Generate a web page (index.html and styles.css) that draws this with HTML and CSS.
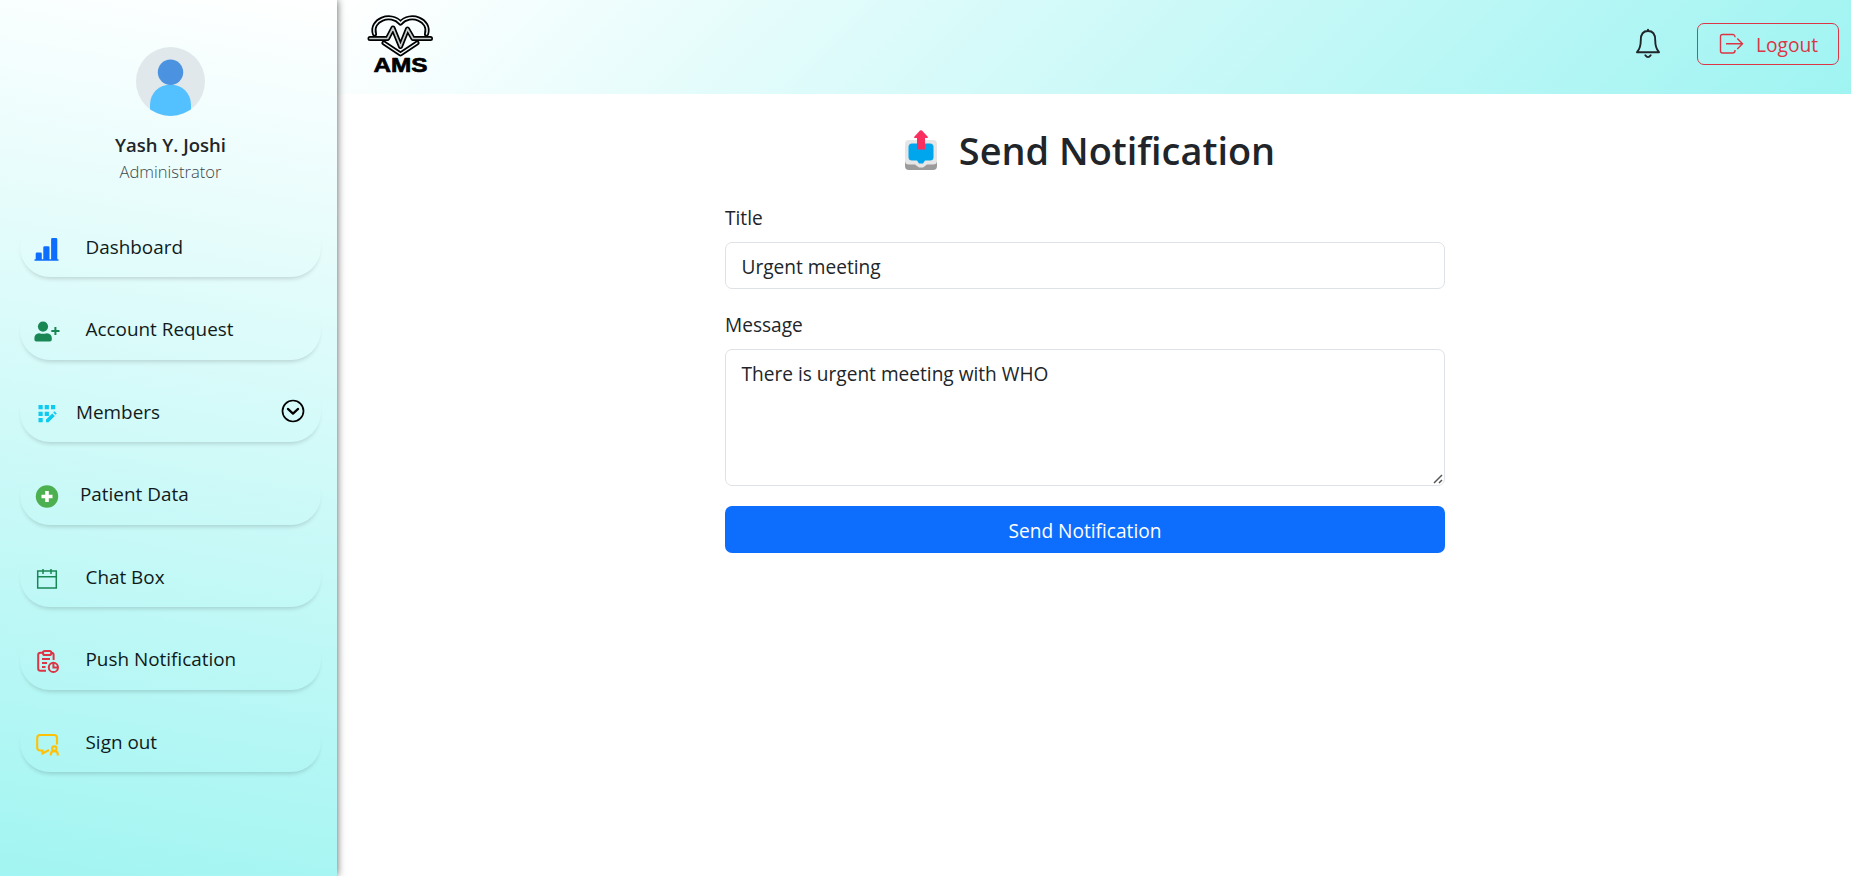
FILE: index.html
```html
<!DOCTYPE html>
<html lang="en">
<head>
<meta charset="utf-8">
<title>AMS - Send Notification</title>
<link rel="stylesheet" href="styles.css">
</head>
<body>
<div class="app">
  <aside class="sidebar">
    <div class="profile">
      <svg class="avatar" viewBox="0 0 69 69">
        <defs><clipPath id="face"><circle cx="34.5" cy="34.5" r="34.5"/></clipPath></defs>
        <g clip-path="url(#face)">
          <rect width="69" height="69" fill="#e1e8eb"/>
          <path d="M14 69V57.5a20.5 20 0 0 1 41 0V69z" fill="#53c0ff"/>
          <circle cx="34.5" cy="25.2" r="12.7" fill="#4b93e0"/>
        </g>
      </svg>
      <div class="name">Yash Y. Joshi</div>
      <div class="role">Administrator</div>
    </div>
    <nav class="menu">
      <a class="item">
        <svg class="icon" viewBox="0 0 26 26"><path fill="#0d6efd" d="M.5 23.2h1.2v-5.4q0-1.3 1.3-1.3h3.5q1.3 0 1.3 1.3v5.4h1.500V11.5q0-1.3 1.3-1.3h3.6q1.3 0 1.3 1.3v11.700h1.6V3.300q0-1.300 1.300-1.300h3.600q1.300 0 1.300 1.300v19.900h1.200v1.600H.5z"/></svg>
        <span class="text">Dashboard</span>
      </a>
      <a class="item">
        <svg class="icon" viewBox="0 0 26 26"><g fill="#198754"><circle cx="9" cy="8.6" r="5.1"/><path d="M5.2 15.2Q9 16.4 12.8 15.2q5 .6 5 5v1.4q0 1.9-1.9 1.9H2.3q-1.9 0-1.9-1.9v-1.4q0-4.4 4.8-5z"/></g><path d="M17.3 13h8.2M21.4 8.9v8.2" stroke="#198754" stroke-width="2"/></svg>
        <span class="text">Account Request</span>
      </a>
      <a class="item">
        <svg class="icon" viewBox="0 0 26 26"><path fill="#0dcaf0" d="M4.500 4h4.200v4.200H4.500zM10.700 4h4.200v4.200h-4.200zM17 4h4.200v4.200H17zM4.500 10.700h4.200v4.200H4.500zM10.700 10.700h4.200v4.200h-4.200zM4.500 17h4.200v4.200H4.500zM12 21.300v-2.700l6.300-6.200 2.500 2.500-6.300 6.400zM19.200 11.400l1.300-1.200 2.300 2.300-1.200 1.300z"/></svg>
        <span class="text text-members">Members</span>
        <svg class="chevron" viewBox="0 0 24 24" fill="none" stroke="#000" stroke-width="1.700"><circle cx="12" cy="12" r="10.500"/><path d="M6.900 9.900l5.100 4.700 5.100-4.700" stroke-width="2.200" stroke-linecap="round" stroke-linejoin="round"/></svg>
      </a>
      <a class="item">
        <svg class="icon" viewBox="0 0 26 26"><circle cx="13" cy="13.500" r="11.200" fill="#4caf50"/><path d="M7.500 13.500h11M13 8v11" stroke="#fff" stroke-width="3.600"/></svg>
        <span class="text text-patient">Patient Data</span>
      </a>
      <a class="item">
        <svg class="icon" viewBox="0 0 26 26" fill="none" stroke="#198754" stroke-width="1.500"><path d="M3.700 5.100h18.600v17H3.700zM3.700 10.800h18.600M9 3v5M17 3v5"/></svg>
        <span class="text">Chat Box</span>
      </a>
      <a class="item">
        <svg class="icon" viewBox="0 0 26 26" fill="none" stroke="#dc3545" stroke-width="2"><path d="M9 4.800H6.500Q4.200 4.800 4.200 7v13.500q0 2.300 2.300 2.300h5.500M17.300 4.800q2.300 0 2.300 2.200v5"/><rect x="9" y="3" width="8.300" height="4" rx="1.800"/><path d="M8 11h8M8 15h5M8 19h3.500"/><circle cx="19.400" cy="19.400" r="4.600"/><path d="M19.400 15v4.400h4.400"/></svg>
        <span class="text">Push Notification</span>
      </a>
      <a class="item">
        <svg class="icon" viewBox="0 0 26 26" fill="none" stroke="#ffc107" stroke-width="2.100"><path d="M23 13.500V7q0-3-3-3H6Q3.200 4 3.200 7v9.500q0 3 3 3h2.300v3l6.500-3.500"/><circle cx="20.300" cy="17.600" r="2.200"/><path d="M16.800 24.500v-1q0-3.400 3.500-3.400t3.500 3.400v1"/></svg>
        <span class="text">Sign out</span>
      </a>
    </nav>
  </aside>
  <div class="page">
    <header class="topbar">
      <svg class="logo" viewBox="0 0 68 66" fill="none" stroke-linejoin="round" stroke-linecap="round">
        <path class="line-out" d="M7.500 23C3 9 24 1 33.500 12C43 1 64 9 59.500 23M17 32L33.500 43L50 32"/>
        <path class="line-in" d="M7.500 23C3 9 24 1 33.500 12C43 1 64 9 59.500 23M17 32L33.500 43L50 32"/>
        <path class="line-out" d="M3 27.500H20.500L26 17L33.500 35.500L40.500 18L46 27.500H63.500"/>
        <path class="line-in line-pulse" d="M3 27.500H20.500L26 17L33.500 35.500L40.500 18L46 27.500H63.500"/>
        <text class="brand" x="6.500" y="61" textLength="54" lengthAdjust="spacingAndGlyphs">AMS</text>
      </svg>
      <div class="actions">
        <svg class="bell" viewBox="0 0 26 32" fill="none" stroke="#212529" stroke-width="1.900" stroke-linejoin="round" stroke-linecap="round"><path d="M13 4C7.500 4 5.800 8.500 5.800 13C5.800 19 4.500 22.500 2 25.200H24C21.500 22.500 20.200 19 20.200 13C20.200 8.500 18.500 4 13 4zM13 4V2.600M10.300 28.300Q13 32 15.700 28.300"/></svg>
        <button class="logout">
          <svg class="logout-icon" viewBox="0 0 25 22" fill="none" stroke="#dc3545" stroke-width="1.400"><path d="M16 4.300V4Q16 1.500 13.500 1.500H3.500Q1.500 1.500 1.500 3.500V18Q1.500 20 3.500 20H13.500Q16 20 16 17.500V17M7 10.700H23.500M18.300 5.500L23.500 10.700L18.300 15.900"/></svg>
          <span>Logout</span>
        </button>
      </div>
    </header>
    <main class="content">
      <h2 class="heading">
        <svg class="outbox" viewBox="0 0 32 40"><rect x="0" y="25" width="32" height="15" rx="4" fill="#9b9b9b"/><path d="M4 10H28Q32 10 32 14V31Q32 34.500 28 34.500H22L18 37.500H14L10 34.500H4Q0 34.500 0 31V14Q0 10 4 10z" fill="#e6e6e6"/><path d="M7 13.500H25Q28.500 13.500 28.500 17V27Q28.500 30.500 25 30.500H20L18 33.500H14L12 30.500H7Q3.500 30.500 3.500 27V17Q3.500 13.500 7 13.500z" fill="#00a6ed"/><path d="M12 19.500V8H9.500Q8.700 7.500 9.300 6.700L15 .6Q16 -.2 17 .6L22.700 6.700Q23.300 7.500 22.500 8H20V19.500z" fill="#f92f60"/></svg>
        <span>Send Notification</span>
      </h2>
      <form class="form">
        <label class="label" for="title">Title</label>
        <input class="control" id="title" type="text" value="Urgent meeting">
        <label class="label label-message" for="message">Message</label>
        <div class="area">
          <textarea class="control control-area" id="message">There is urgent meeting with WHO</textarea>
          <svg class="grip" viewBox="0 0 10 10" stroke="#555" stroke-width="1.500"><path d="M1 9L9 1M6 9L9 6"/></svg>
        </div>
        <button class="submit" type="button">Send Notification</button>
      </form>
    </main>
  </div>
</div>
</body>
</html>
```
FILE: styles.css
```css
* { box-sizing: border-box; }
body {
  margin: 0;
  background: #fff;
  color: #212529;
  font-family: "Open Sans", "Noto Sans", sans-serif;
  font-size: 19.1px;
  line-height: 30px;
}
.app { display: flex; height: 876px; overflow: hidden; }
.sidebar {
  position: relative;
  width: 337px;
  flex: none;
  padding-top: 47px;
  background: linear-gradient(190deg, #fff, #a2f5f2);
  box-shadow: 0 0 8px rgba(0, 0, 0, .65);
}
.profile {
  display: flex;
  flex-direction: column;
  align-items: center;
  padding-left: 4px;
  height: 170px;
}
.avatar { width: 69px; height: 69px; margin-bottom: 14px; }
.name { font-size: 18.5px; font-weight: 600; }
.role { font-size: 16.6px; line-height: 24px; font-weight: 300; color: #3c474b; }
.menu { display: flex; flex-direction: column; gap: 22.5px; padding: 0 16px 0 20px; }
.item {
  display: flex;
  align-items: center;
  height: 60px;
  padding: 0 16px 0 14px;
  border-radius: 30px;
  color: #111a1b;
  font-size: 18.9px;
  box-shadow: 0 4px 4px -2px rgba(0, 0, 0, .15);
}
.icon { width: 26px; height: 26px; margin-top: 3px; flex: none; }
.text { margin: -1px 0 0 25.5px; }
.text-members { margin-left: 16px; }
.text-patient { margin-left: 20px; }
.chevron { width: 24px; height: 24px; margin: -3px 0 0 auto; }
.page { flex: 1; }
.topbar {
  display: flex;
  align-items: flex-start;
  justify-content: space-between;
  height: 94px;
  padding: 11px 12px 0 30px;
  background: linear-gradient(135deg, #fff, #9ff4f2);
}
.logo { width: 68px; height: 66px; }
.line-out { stroke: #000; stroke-width: 5; }
.line-in { stroke: #f2fbfb; stroke-width: 1.5; }
.line-pulse { stroke: #c4cccc; stroke-width: 1.7; }
.brand { font: bold 21px "Liberation Sans", Arial, sans-serif; fill: #000; stroke: #000; stroke-width: .7; }
.actions { display: flex; align-items: flex-start; padding-top: 12px; }
.bell { width: 26px; height: 32px; margin: 4px 36px 0 0; }
.logout {
  display: flex;
  align-items: center;
  width: 142px;
  height: 42px;
  padding: 0 0 0 21px;
  border: 1px solid #dc3545;
  border-radius: 7px;
  background: none;
  color: #dc3545;
  font: inherit;
  font-size: 19.2px;
}
.logout span { padding-top: 2px; }
.logout-icon { width: 25px; height: 22px; margin-right: 12px; }
.content { padding-top: 29px; padding-right: 8px; }
.heading {
  display: flex;
  align-items: center;
  justify-content: center;
  gap: 22px;
  margin: 0;
  height: 52px;
  font-size: 37.9px;
  font-weight: 600;
}
.heading span { padding-top: 1px; }
.outbox { width: 32px; height: 40px; margin-top: 2px; }
.form { display: flex; flex-direction: column; width: 720px; margin: 0 0 0 388px; padding-top: 28px; }
.label { margin-bottom: 9px; }
.label-message { margin-top: 21px; margin-bottom: 9px; }
.control {
  display: block;
  width: 100%;
  height: 47px;
  padding: 8px 15.5px 6px;
  border: 1px solid #dee2e6;
  border-radius: 7px;
  background: #fff;
  color: #212529;
  font: inherit;
  line-height: 30px;
  outline: none;
}
.control-area { height: 137px; padding-top: 9px; resize: none; }
.area { position: relative; margin-bottom: 20px; }
.grip { position: absolute; right: 2px; bottom: 2px; width: 10px; height: 10px; fill: none; }
.submit {
  height: 47px;
  padding: 2px 0 0;
  border: 0;
  border-radius: 7px;
  background: #0d6efd;
  color: #fff;
  font: inherit;
}
```
